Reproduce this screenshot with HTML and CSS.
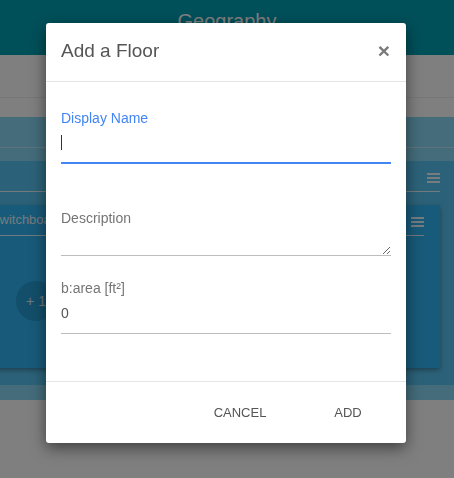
FILE: index.html
```html
<!DOCTYPE html>
<html lang="en">
<head>
<meta charset="utf-8">
<title>Geography - Add a Floor</title>
<link rel="stylesheet" href="styles.css">
</head>
<body>
<div class="page">
  <header class="topbar">
    <h1 class="topbar-title">Geography</h1>
  </header>
  <div class="toolbar">
    <div class="toolbar-row"></div>
  </div>
  <section class="panel-a">
    <div class="panel-a-head"></div>
    <div class="panel-b">
      <div class="panel-b-head">
        <svg class="burger" width="13" height="10" viewBox="0 0 13 10"><rect y="0" width="13" height="2"/><rect y="4" width="13" height="2"/><rect y="8" width="13" height="2"/></svg>
      </div>
      <div class="card">
        <div class="card-head">
          <span class="card-title">switchboard</span>
          <svg class="burger" width="13" height="10" viewBox="0 0 13 10"><rect y="0" width="13" height="2"/><rect y="4" width="13" height="2"/><rect y="8" width="13" height="2"/></svg>
        </div>
        <div class="card-body">
          <div class="count-badge">+ 1</div>
        </div>
      </div>
    </div>
  </section>
</div>

<div class="backdrop"></div>

<div class="modal" role="dialog">
  <div class="modal-header">
    <h4 class="modal-title">Add a Floor</h4>
    <button class="close" type="button">&times;</button>
  </div>
  <div class="modal-body">
    <div class="field field--name">
      <label class="field-label is-focused">Display Name</label>
      <div class="field-control has-caret">
        <input class="field-input is-focused" type="text">
      </div>
    </div>
    <div class="field field--desc">
      <label class="field-label">Description</label>
      <div class="field-control">
        <textarea class="field-textarea"></textarea>
      </div>
    </div>
    <div class="field field--area">
      <label class="field-label">b:area [ft²]</label>
      <div class="field-control">
        <input class="field-input field-input--value" type="text" value="0">
      </div>
    </div>
  </div>
  <div class="modal-footer">
    <button class="btn-flat" type="button">Cancel</button>
    <button class="btn-flat" type="button">Add</button>
  </div>
</div>
</body>
</html>
```

FILE: styles.css
```css
* { box-sizing: border-box; }

html, body {
  margin: 0;
  padding: 0;
  width: 454px;
  height: 478px;
  overflow: hidden;
  background: #ffffff;
  font-family: "Liberation Sans", Arial, sans-serif;
}

.page {
  width: 454px;
}

/* top bar */
.topbar {
  height: 55px;
  background: #00a0b4;
  padding-top: 10px;
}
.topbar-title {
  margin: 0;
  text-align: center;
  color: #ffffff;
  font-size: 20px;
  font-weight: normal;
  line-height: 23px;
}

/* white toolbar */
.toolbar {
  height: 62px;
  background: #ffffff;
}
.toolbar-row {
  height: 43px;
  border-bottom: 1px solid #eeeeee;
}

/* outer light panel */
.panel-a {
  background: #88d8f6;
  padding-bottom: 15px;
}
.panel-a-head {
  height: 31px;
  border-bottom: 1px solid rgba(255,255,255,0.45);
  margin-bottom: 13px;
}

/* inner panel */
.panel-b {
  background: #58c4f2;
  padding: 0 14px 17px 0;
}
.panel-b-head {
  height: 31px;
  display: flex;
  justify-content: flex-end;
  align-items: flex-end;
  padding-bottom: 8px;
  border-bottom: 1px solid rgba(255,255,255,0.85);
  margin-bottom: 13px;
}

.burger { display: block; fill: rgba(255,255,255,0.9); }

/* card */
.card {
  margin-left: -23px;
  height: 163px;
  background: #30b4f2;
  padding: 0 16px 0 16px;
  box-shadow: 0 2px 5px rgba(0,0,0,0.35);
}
.card-head {
  height: 31px;
  display: flex;
  justify-content: space-between;
  align-items: flex-end;
  padding-bottom: 8px;
  border-bottom: 1px solid rgba(255,255,255,0.85);
}
.card-title {
  color: rgba(255,255,255,0.9);
  font-size: 13px;
  line-height: 16px;
  margin-bottom: -1px;
}
.card-body {
  padding-top: 45px;
  padding-left: 23px;
}
.count-badge {
  width: 40px;
  height: 40px;
  border-radius: 50%;
  background: #269ed4;
  color: rgba(255,255,255,0.85);
  font-size: 14px;
  display: flex;
  align-items: center;
  justify-content: center;
}

/* overlay */
.backdrop {
  position: fixed;
  inset: 0;
  background: rgba(0,0,0,0.5);
}

/* modal */
.modal {
  position: absolute;
  left: 46px;
  top: 23px;
  width: 360px;
  background: #ffffff;
  border-radius: 3px;
  box-shadow: 0 5px 15px rgba(0,0,0,0.5);
}
.modal-header {
  height: 59px;
  padding: 14px 16px 17px 15px;
  border-bottom: 1px solid #e5e5e5;
  display: flex;
  align-items: center;
  justify-content: space-between;
}
.modal-title {
  margin: 0;
  font-size: 19px;
  font-weight: normal;
  line-height: 27px;
  color: #555555;
}
.close {
  border: 0;
  padding: 0;
  background: transparent;
  font-family: "Liberation Sans", Arial, sans-serif;
  font-size: 21px;
  font-weight: bold;
  line-height: 1;
  color: #7a7a7a;
}

.modal-body {
  padding: 27px 15px 47px 15px;
}
.field-label {
  display: block;
  font-size: 14px;
  line-height: 16px;
  padding-top: 1px;
  color: #757575;
}
.field-label.is-focused { color: #4285f4; }

.field--desc { margin-top: 45px; }
.field--area { margin-top: 23px; }

.field-control { position: relative; }
.field-control.has-caret::after {
  content: "";
  position: absolute;
  left: 0;
  top: 9px;
  width: 1px;
  height: 15px;
  background: #333333;
}

.field-input {
  display: block;
  width: 100%;
  height: 38px;
  margin: 0;
  padding: 0;
  border: 0;
  border-bottom: 1px solid #bdbdbd;
  border-radius: 0;
  outline: none;
  background: transparent;
  font-family: "Liberation Sans", Arial, sans-serif;
  font-size: 14px;
  color: #555555;
}
.field-input--value {
  padding-bottom: 3px;
}
.field-input.is-focused {
  border-bottom: 2px solid #4285f4;
}
.field-textarea {
  display: block;
  width: 100%;
  height: 30px;
  margin: 0;
  padding: 0;
  border: 0;
  border-bottom: 1px solid #bdbdbd;
  border-radius: 0;
  outline: none;
  resize: vertical;
  background: transparent;
  font-family: "Liberation Sans", Arial, sans-serif;
  font-size: 14px;
  color: #555555;
}

.modal-footer {
  border-top: 1px solid #e5e5e5;
  padding: 12px 14px 13px 15px;
  display: flex;
  justify-content: flex-end;
  gap: 20px;
}
.btn-flat {
  height: 36px;
  min-width: 88px;
  padding: 0 16px;
  border: 0;
  background: transparent;
  font-family: "Liberation Sans", Arial, sans-serif;
  font-size: 13px;
  text-transform: uppercase;
  color: #555555;
}
```
